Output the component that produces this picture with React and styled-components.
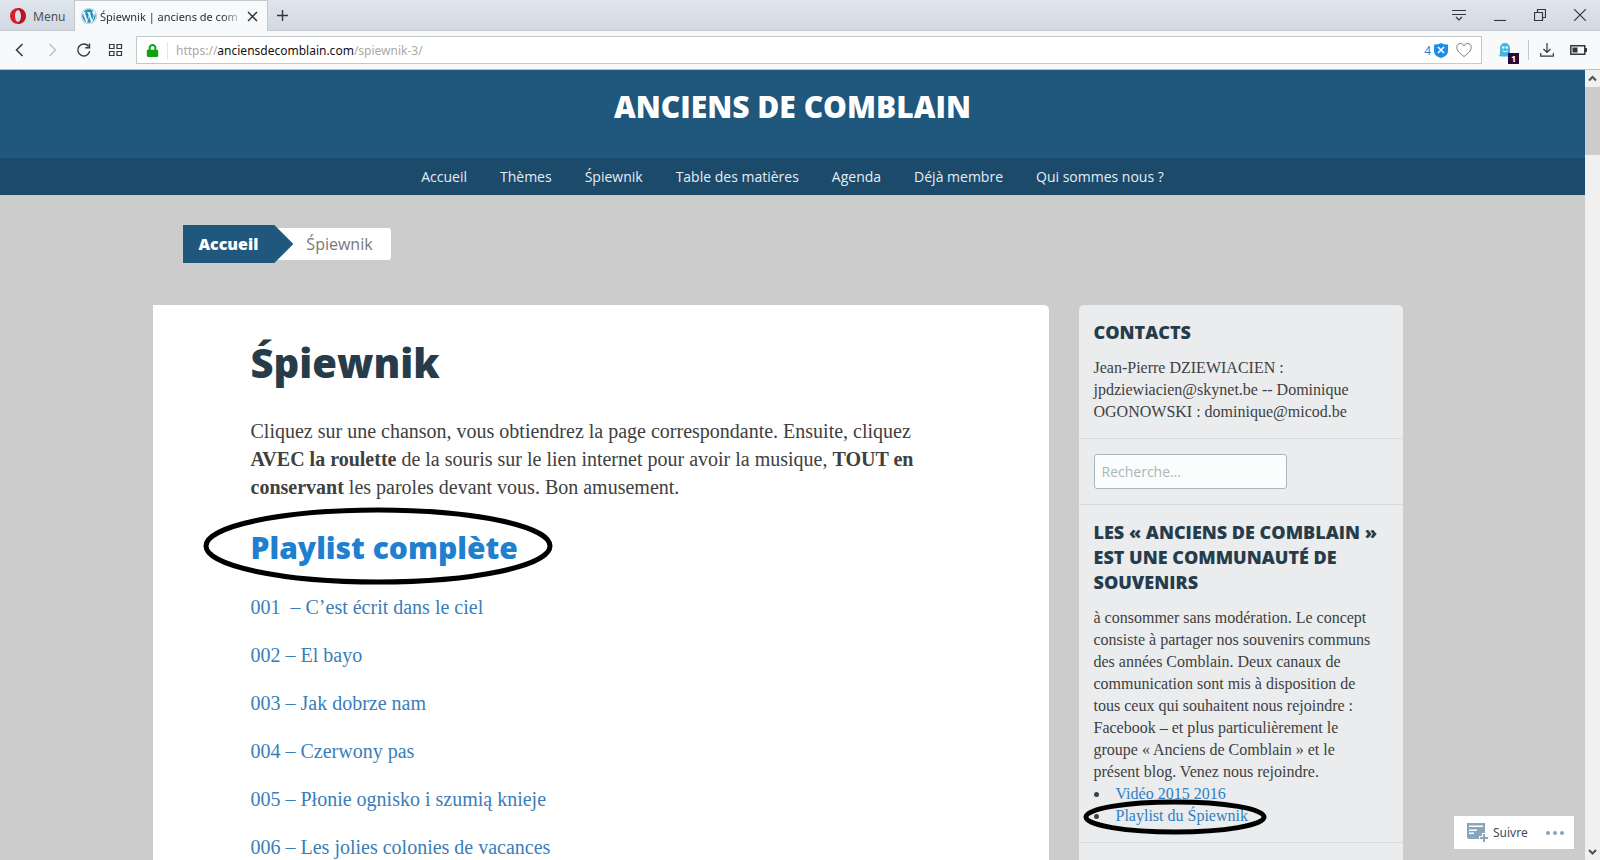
import React, { useState } from 'react'
import styled, { createGlobalStyle } from 'styled-components'
import { FaWordpress, FaLock } from 'react-icons/fa'

const GlobalStyle = createGlobalStyle`
  * {
    box-sizing: border-box;
  }
  body {
    margin: 0;
    background: #ccc;
    font-family: 'Open Sans', 'Noto Sans', sans-serif;
  }
  button {
    margin: 0;
    padding: 0;
    border: 0;
    background: none;
    font: inherit;
    color: inherit;
  }
  a {
    text-decoration: none;
  }
  svg {
    display: block;
  }
`

const Browser = styled.div`
  display: flex;
  flex-direction: column;
  height: 100vh;
  overflow: hidden;
`

/* Tab strip */
const TabBar = styled.div`
  display: flex;
  flex: none;
  height: 31px;
  background: linear-gradient(#dfe5ed, #d3d9e2);
  border-bottom: 1px solid #c3c8cd;
  font-family: 'Noto Sans', 'Open Sans', sans-serif;
  font-size: 12px;
`
const MenuButton = styled.button`
  display: flex;
  align-items: center;
  gap: 7px;
  width: 74px;
  padding: 2px 0 0 10px;
  color: #4c5157;
`
const Tab = styled.div`
  display: flex;
  align-items: center;
  gap: 3px;
  width: 194px;
  height: 31px;
  padding: 0 9px 0 6px;
  background: #f7f9fb;
  border: 1px solid #c3c8cd;
  border-bottom: 0;
  color: #2b2d30;
`
const TabTitle = styled.span`
  flex: 1;
  font-size: 11px;
  white-space: nowrap;
  mask-image: linear-gradient(to right, #000 85%, transparent);
`
const NewTab = styled.button`
  padding: 0 9px;
  color: #33363b;
`
const WindowButtons = styled.div`
  display: flex;
  align-items: center;
  gap: 28px;
  margin-left: auto;
  padding-right: 14px;
  color: #33363b;
`

/* Address bar */
const Toolbar = styled.div`
  display: flex;
  flex: none;
  align-items: center;
  height: 39px;
  padding: 0 13px 0 12px;
  background: #f7f9fb;
  border-bottom: 1px solid #b9c2c9;
  color: #33363b;
`
const NavButtons = styled.div`
  display: flex;
  gap: 16px;
  width: 124px;
`
const Address = styled.div`
  display: flex;
  flex: 1;
  align-items: center;
  height: 28px;
  padding: 0 9px;
  background: #fff;
  border: 1px solid #c3c8cb;
  font-family: 'Noto Sans', 'Open Sans', sans-serif;
  font-size: 12px;
`
const Url = styled.span`
  flex: 1;
  margin-left: 8px;
  padding-left: 8px;
  border-left: 1px solid #e2e4e6;
  color: #a9a9a9;
  b {
    font-weight: 400;
    color: #111;
  }
`
const Blocked = styled.button`
  display: flex;
  align-items: center;
  gap: 3px;
  margin-right: 8px;
  color: #2483d8;
`
const Extension = styled.button`
  position: relative;
  margin: 0 16px 0 16px;
`
const Badge = styled.span`
  position: absolute;
  left: 10px;
  top: 11px;
  width: 11px;
  height: 11px;
  background: #2a0a33;
  color: #fff;
  font-size: 9px;
  font-weight: 700;
  line-height: 11px;
`
const ToolGroup = styled.div`
  display: flex;
  align-items: center;
  gap: 16px;
  height: 20px;
  padding-left: 11px;
  border-left: 1px solid #c3c8cb;
`

/* Site */
const Viewport = styled.div`
  position: relative;
  display: flex;
  flex: 1;
  min-height: 0;
`
const Page = styled.div`
  flex: 1;
  overflow: hidden;
`
const Scrollbar = styled.div`
  display: flex;
  flex-direction: column;
  align-items: center;
  width: 15px;
  background: #f0f0f0;
  color: #505050;
`
const ScrollArrow = styled.button`
  display: flex;
  align-items: center;
  height: 17px;
`
const Thumb = styled.div`
  width: 100%;
  height: 68px;
  margin-bottom: auto;
  background: #cdcdcd;
`
const Header = styled.header`
  height: 88px;
  padding-top: 16px;
  background: #20577d;
  text-align: center;
`
const SiteTitle = styled.a`
  color: #fff;
  font-size: 30px;
  font-weight: 800;
  line-height: 42px;
`
const Menu = styled.nav`
  display: flex;
  justify-content: center;
  gap: 33px;
  height: 37px;
  background: #1c4a6b;
  a {
    color: #e6edf2;
    font-size: 14px;
    line-height: 37px;
  }
`
const Wrapper = styled.div`
  max-width: 1280px;
  margin: 0 auto;
  padding-right: 30px;
`
const Breadcrumb = styled.nav`
  display: flex;
  align-items: center;
  padding: 30px 0 42px 30px;
  font-size: 16px;
`
const Home = styled.a`
  z-index: 1;
  padding: 0 35px 0 16px;
  background: #20577d;
  clip-path: polygon(0 0, calc(100% - 19px) 0, 100% 50%, calc(100% - 19px) 100%, 0 100%);
  color: #fff;
  font-weight: 800;
  line-height: 38px;
`
const Current = styled.span`
  margin-left: -19px;
  padding: 0 18px 0 32px;
  background: #fff;
  border-radius: 0 3px 3px 0;
  color: #777;
  line-height: 32px;
`
const Columns = styled.div`
  display: flex;
  gap: 30px;
`
const Article = styled.main`
  flex: 1;
  padding: 28px 98px 60px;
  background: #fff;
  border-radius: 0 5px 0 0;
  color: #404040;
  font-family: 'Liberation Serif', serif;
  font-size: 20px;
  line-height: 28px;
`
const PageTitle = styled.h1`
  margin: 0 0 24px;
  color: #273c4a;
  font-family: 'Open Sans', sans-serif;
  font-size: 40px;
  font-weight: 800;
  line-height: 60px;
`
const Intro = styled.p`
  margin: 0 0 26px;
`
const PlaylistTitle = styled.h2`
  margin: 0 0 24px;
  font-family: 'Open Sans', sans-serif;
  font-size: 30px;
  font-weight: 800;
  line-height: 42px;
  a {
    position: relative;
    color: #1f80d0;
  }
`
const Song = styled.p`
  margin: 0 0 20px;
  a {
    color: #3a7db8;
    white-space: pre;
  }
`
const Ring = styled.svg`
  position: absolute;
  left: ${p => p.$left}px;
  top: ${p => p.$top}px;
  fill: none;
  stroke: #000;
  stroke-width: 5;
  pointer-events: none;
`
const Sidebar = styled.aside`
  flex: 0 1 324px;
  background: #eaecee;
  border-radius: 5px 5px 0 0;
  color: #404040;
`
const Widget = styled.section`
  padding: 15px;
  border-bottom: 1px solid #d8dbdd;
`
const WidgetTitle = styled.h3`
  margin: 0 0 12px;
  color: #273c4a;
  font-size: 18px;
  font-weight: 800;
  line-height: 25px;
`
const WidgetText = styled.div`
  font-family: 'Liberation Serif', serif;
  font-size: 16px;
  line-height: 22px;
  a {
    position: relative;
    color: #2f7fc4;
  }
`
const Links = styled.ul`
  margin: 0;
  padding: 0;
  list-style: none;
  li {
    display: flex;
    align-items: center;
    gap: 17px;
  }
  li::before {
    content: '';
    width: 5px;
    height: 5px;
    border-radius: 50%;
    background: #404040;
  }
`
const Search = styled.input`
  display: block;
  width: 193px;
  height: 35px;
  padding: 0 7px;
  background: #fbfcfc;
  border: 1px solid #a9b7bf;
  border-radius: 3px;
  font-family: inherit;
  font-size: 14px;
  &::placeholder {
    color: #a9b7bb;
  }
`
const FollowBar = styled.div`
  position: absolute;
  right: 26px;
  bottom: 11px;
  display: flex;
  align-items: center;
  justify-content: space-between;
  width: 120px;
  height: 33px;
  padding: 0 10px 0 13px;
  background: #fff;
  color: #3d4d58;
  font-family: 'Noto Sans', sans-serif;
  font-size: 12px;
  button {
    display: flex;
    align-items: center;
    gap: 4px;
  }
`

const Icon = ({ size = 16, width, children, ...rest }) => (
  <svg
    width={width || size}
    height={size}
    viewBox={`0 0 ${width || size} ${size}`}
    fill="none"
    stroke="currentColor"
    strokeWidth="1.4"
    aria-hidden="true"
    {...rest}
  >
    {children}
  </svg>
)

const menu = ['Accueil', 'Thèmes', 'Śpiewnik', 'Table des matières', 'Agenda', 'Déjà membre', 'Qui sommes nous ?']

const songs = [
  '001  – C’est écrit dans le ciel',
  '002 – El bayo',
  '003 – Jak dobrze nam',
  '004 – Czerwony pas',
  '005 – Płonie ognisko i szumią knieje',
  '006 – Les jolies colonies de vacances'
]

const BrowserTabs = () => (
  <TabBar>
    <MenuButton>
      <svg width="16" height="16" viewBox="0 0 16 16" aria-hidden="true">
        <path fill="#d81e2c" fillRule="evenodd" d="M8 0a8 8 0 1 0 0 16A8 8 0 0 0 8 0zm0 2.200c1.900 0 3 2.500 3 5.800s-1.100 5.800-3 5.800S5 11.300 5 8s1.100-5.800 3-5.800z" />
        <path fill="#a3101c" d="M10 .3a8 8 0 0 1 0 15.400c-1 .3-2 .1-2.500-.3C10 14.500 11 11.500 11 8S10 1.500 7.500.6C8 .2 9 0 10 .3z" opacity=".6" />
      </svg>
      Menu
    </MenuButton>
    <Tab>
      <FaWordpress size={16} color="#2192c0" />
      <TabTitle>Śpiewnik | anciens de com</TabTitle>
      <button aria-label="Fermer l’onglet">
        <Icon size={11}><path d="M1 1l9 9M10 1l-9 9" /></Icon>
      </button>
    </Tab>
    <NewTab aria-label="Nouvel onglet">
      <Icon size={11}><path d="M5.500 0v11M0 5.500h11" /></Icon>
    </NewTab>
    <WindowButtons>
      <button aria-label="Onglets">
        <Icon width={14} size={12}><path d="M0 1.500h14M0 5.500h14M4 8l3 3 3-3" strokeWidth="1.200" /></Icon>
      </button>
      <button aria-label="Réduire">
        <Icon width={12} size={12}><path d="M0 11.500h12" strokeWidth="1.200" /></Icon>
      </button>
      <button aria-label="Restaurer">
        <Icon size={12}><path d="M.5 3.500h8v8h-8zM3.500 3.500v-3h8v8h-3" strokeWidth="1.200" /></Icon>
      </button>
      <button aria-label="Fermer">
        <Icon size={12}><path d="M0 0l12 12M12 0L0 12" strokeWidth="1.200" /></Icon>
      </button>
    </WindowButtons>
  </TabBar>
)

const BrowserToolbar = () => (
  <Toolbar>
    <NavButtons>
      <button aria-label="Précédent">
        <Icon><path d="M10.500 2L4.500 8l6 6" strokeWidth="1.500" /></Icon>
      </button>
      <button aria-label="Suivant">
        <Icon color="#b9bdc1"><path d="M5.500 2l6 6-6 6" /></Icon>
      </button>
      <button aria-label="Recharger">
        <Icon><path d="M12.500 4.200A6 6 0 1 0 13.700 9.200M13.500 1.500v4.200H9.300" strokeWidth="1.400" /></Icon>
      </button>
      <button aria-label="Accès rapide">
        <Icon><path d="M1.500 2.500h4.500v4H1.500zM9 2.500h4.500v4H9zM1.500 9.500h4.500v4H1.500zM9 9.500h4.500v4H9z" strokeWidth="1.200" /></Icon>
      </button>
    </NavButtons>
    <Address>
      <FaLock size={13} color="#0ca30c" />
      <Url>https://<b>anciensdecomblain.com</b>/spiewnik-3/</Url>
      <Blocked aria-label="4 publicités bloquées">
        4
        <svg width="14" height="15" viewBox="0 0 14 15" aria-hidden="true">
          <path fill="#1b8fe6" d="M7 0c2 1.200 4.500 1.500 7 1.500V8c0 3.500-3 6-7 7-4-1-7-3.500-7-7V1.500C2.500 1.500 5 1.200 7 0z" />
          <path stroke="#fff" strokeWidth="1.500" d="M4 4l6 6M10 4l-6 6" />
        </svg>
      </Blocked>
      <button aria-label="Favori">
        <Icon color="#777"><path d="M8 14.500C4 11.500.8 9 .8 5.400.8 3 2.500 1.500 4.300 1.500 6 1.500 7.400 2.500 8 4c.6-1.500 2-2.500 3.700-2.500 1.800 0 3.500 1.500 3.500 3.900 0 3.600-3.200 6.100-7.200 9.100z" strokeWidth="1" /></Icon>
      </button>
    </Address>
    <Extension aria-label="Ghostery">
      <svg width="14" height="16" viewBox="0 0 14 16" aria-hidden="true">
        <path fill="#45b4e2" d="M2 6a5 5 0 0 1 10 0v5c0 1.500 1 2 1.500 2.500-1 1-2.300.8-3 .2-.8 1.500-2 1.300-3 .3-1 1.300-2.300 1-3 0-1.200 1-2.700.7-3.500-.5C1.700 13 2 12 2 11z" />
        <circle cx="5.300" cy="5.500" r="1.200" fill="#fff" />
        <circle cx="8.700" cy="5.500" r="1.200" fill="#fff" />
        <path fill="none" stroke="#fff" d="M4.500 8.500c1.500 1.500 3.500 1.500 5 0" />
      </svg>
      <Badge>1</Badge>
    </Extension>
    <ToolGroup>
      <button aria-label="Téléchargements">
        <Icon width={14} size={14}><path d="M7 0v9M3.500 6L7 9.500 10.500 6M.7 10v3.200h12.600V10" strokeWidth="1.200" /></Icon>
      </button>
      <button aria-label="Batterie">
        <Icon width={17} size={10}>
          <path d="M.8.8h14v8.400H.8z" strokeWidth="1.500" />
          <path d="M2.500 2.500h5v5h-5zM15 3h2v4h-2z" fill="currentColor" stroke="none" />
        </Icon>
      </button>
    </ToolGroup>
  </Toolbar>
)

const Aside = () => {
  const [search, setSearch] = useState('')

  return (
    <Sidebar>
      <Widget>
        <WidgetTitle>CONTACTS</WidgetTitle>
        <WidgetText>
          Jean-Pierre DZIEWIACIEN :<br />
          jpdziewiacien@skynet.be -- Dominique<br />
          OGONOWSKI : dominique@micod.be
        </WidgetText>
      </Widget>
      <Widget>
        <Search
          aria-label="Recherche"
          placeholder="Recherche…"
          value={search}
          onChange={e => setSearch(e.target.value)}
        />
      </Widget>
      <Widget>
        <WidgetTitle>
          LES « ANCIENS DE COMBLAIN »<br />
          EST UNE COMMUNAUTÉ DE<br />
          SOUVENIRS
        </WidgetTitle>
        <WidgetText>
          à consommer sans modération. Le concept<br />
          consiste à partager nos souvenirs communs<br />
          des années Comblain. Deux canaux de<br />
          communication sont mis à disposition de<br />
          tous ceux qui souhaitent nous rejoindre :<br />
          Facebook – et plus particulièrement le<br />
          groupe « Anciens de Comblain » et le<br />
          présent blog. Venez nous rejoindre.
          <Links>
            <li><a href="#video">Vidéo 2015 2016</a></li>
            <li>
              <a href="#playlist">
                Playlist du Śpiewnik
                <Ring $left={-33} $top={-6} width="184" height="36">
                  <ellipse cx="92" cy="18" rx="89" ry="15" />
                </Ring>
              </a>
            </li>
          </Links>
        </WidgetText>
      </Widget>
    </Sidebar>
  )
}

const App = () => (
  <Browser>
    <GlobalStyle />
    <BrowserTabs />
    <BrowserToolbar />
    <Viewport>
      <Page>
        <Header>
          <SiteTitle href="#">ANCIENS DE COMBLAIN</SiteTitle>
        </Header>
        <Menu>
          {menu.map(item => <a key={item} href="#menu">{item}</a>)}
        </Menu>
        <Wrapper>
          <Breadcrumb>
            <Home href="#">Accueil</Home>
            <Current>Śpiewnik</Current>
          </Breadcrumb>
          <Columns>
            <Article>
              <PageTitle>Śpiewnik</PageTitle>
              <Intro>
                Cliquez sur une chanson, vous obtiendrez la page correspondante. Ensuite, cliquez<br />
                <b>AVEC la roulette</b> de la souris sur le lien internet pour avoir la musique, <b>TOUT en</b><br />
                <b>conservant</b> les paroles devant vous. Bon amusement.
              </Intro>
              <PlaylistTitle>
                <a href="#playlist">
                  Playlist complète
                  <Ring $left={-48} $top={-20} width="350" height="78">
                    <ellipse cx="175" cy="39" rx="172" ry="36" />
                  </Ring>
                </a>
              </PlaylistTitle>
              {songs.map(song => <Song key={song}><a href="#song">{song}</a></Song>)}
            </Article>
            <Aside />
          </Columns>
        </Wrapper>
      </Page>
      <Scrollbar>
        <ScrollArrow aria-label="Monter">
          <Icon size={9}><path d="M1 6.500L4.500 3 8 6.500" strokeWidth="2" /></Icon>
        </ScrollArrow>
        <Thumb />
        <ScrollArrow aria-label="Descendre">
          <Icon size={9}><path d="M1 3l3.500 3.500L8 3" strokeWidth="2" /></Icon>
        </ScrollArrow>
      </Scrollbar>
      <FollowBar>
        <button>
          <svg width="22" height="20" viewBox="0 0 22 20" aria-hidden="true">
            <path fill="#87a6bc" d="M0 0h18v10h-3v3h-3v3H2a2 2 0 0 1-2-2zM2 2.500V4h14V2.500zM2 6.500V8h8V6.500zM2 9.500V11h5V9.500zM16 11h2v3h3v2h-3v3h-2v-3h-3v-2h3z" fillRule="evenodd" />
          </svg>
          Suivre
        </button>
        <button aria-label="Plus">
          <svg width="18" height="4" viewBox="0 0 18 4" fill="#87a6bc" aria-hidden="true">
            <circle cx="2" cy="2" r="2" />
            <circle cx="9" cy="2" r="2" />
            <circle cx="16" cy="2" r="2" />
          </svg>
        </button>
      </FollowBar>
    </Viewport>
  </Browser>
)

export default App
